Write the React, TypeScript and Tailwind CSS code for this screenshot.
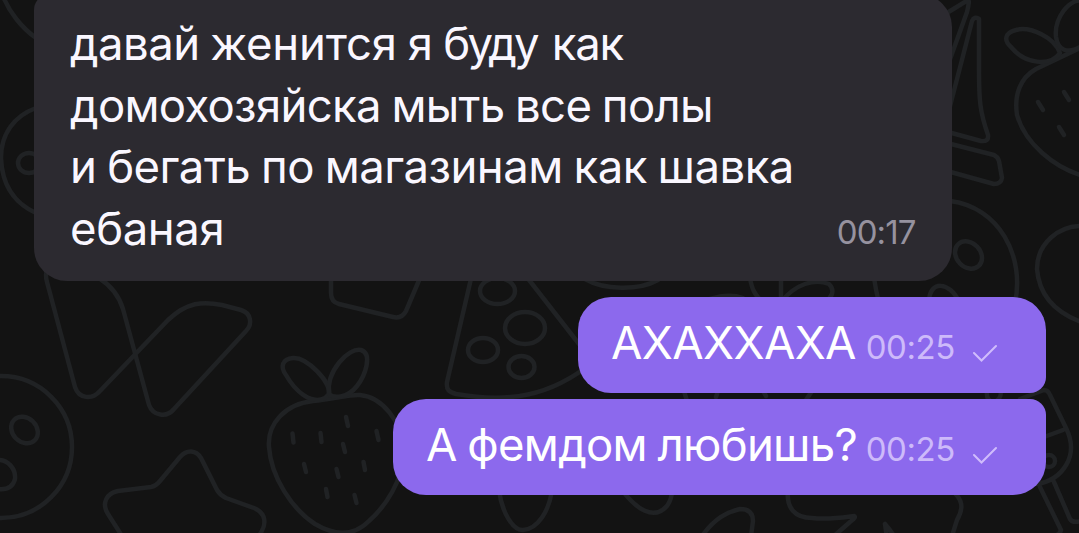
import clsx from "clsx";

const incoming = [
  [
    { text: "давай ", tracking: "tracking-[-0.55px]" },
    { text: "женится ", tracking: "tracking-[-0.2px]" },
    { text: "я ", tracking: "tracking-[-0.5px]" },
    { text: "буду ", tracking: "tracking-[-2.8px] [word-spacing:5px]" },
    { text: "как", tracking: "tracking-[-1.2px]" },
  ],
  [{ text: "домохозяйска мыть все полы", tracking: "tracking-[-0.69px]" }],
  [{ text: "и бегать по магазинам как шавка", tracking: "tracking-[-0.53px]" }],
  [{ text: "ебаная", tracking: "tracking-[-0.4px]" }],
];

const outgoing = [
  {
    text: "АХАХХАХА",
    time: "00:25",
    box: "w-[468px] rounded-[33px] rounded-br-[16px]",
    tracking: "tracking-[-0.6px]",
  },
  {
    text: "А фемдом любишь?",
    time: "00:25",
    box: "w-[653px] rounded-[33px] rounded-tr-[16px]",
    tracking: "tracking-[-0.7px]",
  },
];

const Wallpaper = () => (
  <svg
    aria-hidden="true"
    className="absolute inset-0"
    width="1079"
    height="533"
    viewBox="0 0 1079 533"
    fill="none"
    stroke="#202224"
    strokeWidth="4.5"
    strokeLinecap="round"
    strokeLinejoin="round"
  >
    {/* left edge */}
    <path d="M3 -4C9 12 22 28 36 38" />
    <path d="M36 108C14 116 1 134 1 158C2 184 14 203 36 213" />
    <ellipse cx="29" cy="163" rx="11" ry="10" />
    {/* ribbon */}
    <path d="M47 270Q45 275 47 282L75 387C79 399 92 400 100 391L168 320C187 302 203 301 222 305L241 310C251 313 253 324 246 331L174 409C167 418 153 416 149 405L123 309C119 296 110 285 99 278" />
    {/* cookie, left */}
    <circle cx="1" cy="447" r="71" />
    <ellipse cx="24.500" cy="430" rx="12" ry="14.500" transform="rotate(-45 24.500 430)" />
    <path d="M-3 460C8 459 16 469 15 479Q12 491 -3 489" />
    {/* star */}
    <path d="M122 536L108 514C101 503 107 493 118 491L151 487Q156 486 160 481L180 457C187 449 196 450 201 458L217 490Q220 495 226 498L254 508C266 513 267 524 260 534" />
    {/* strawberry, left */}
    <path d="M313 401C285 404 267 424 269 447C271 477 292 509 315 524C337 537 355 535 369 521C386 506 402 481 405 452C402 421 382 397 360 395C350 394 335 399 313 401Z" />
    <path d="M329 394C331 382 307 357 293 358C282 359 280 367 286 375C295 391 311 405 325 398Z" />
    <path d="M329 394C326 371 349 347 361 350C373 354 365 376 357 386C347 399 333 398 329 394" />
    <path d="M292.500 433.500l1 9M320.500 433l1 9M346 417l2 9M376.500 431l2 9M343 444l2 8M304 464l2 8M336.500 469l2 8M363.500 462l1.500 8M326 489l1.500 8M354.500 495l2 8" />
    {/* wrapper */}
    <path d="M331 278V293Q331 302 339 304L393 317Q402 319 406 311L420 278" />
    {/* pizza slice */}
    <path d="M473 270L447 382C446 390 449 392 456 394C508 403 550 397 593 362L526 276" />
    <ellipse cx="497.500" cy="291" rx="17.500" ry="13" />
    <ellipse cx="525" cy="328" rx="20" ry="16" />
    <ellipse cx="483" cy="350" rx="15" ry="12" />
    <ellipse cx="521.500" cy="367" rx="13" ry="11" />
    {/* shapes peeking out between the bubbles */}
    <path d="M585 279C604 290 638 291 658 280" />
    <path d="M710 299Q729 293 743 298" />
    <path d="M750 278C752 290 755 294 761 301M781 278V302C795 284 815 278 829 284C836 291 831 298 825 302" />
    <path d="M684 391L687 401M718 391L716 397M763 391L766 396M812 391L806 400M987 391Q986 401 993 402Q1001 401 1001 391" />
    <path d="M499 490C502 514 514 531 523 530C538 529 549 511 552 490" />
    <path d="M622 490C636 509 654 521 667 506Q672 499 672 490" />
    <path d="M702 536C715 518 727 512 740 509Q753 509 753 521L751 536" />
    <path d="M788 490C786 508 795 518 812 518C829 520 846 517 854 516Q857 517 850 522L834 536M885 524Q892 532 895 538M885 524L887 538M951 490C963 499 964 508 957 520L952 536" />
    {/* sail boat */}
    <path d="M942 16L968 0Q970 0 967 12L949 62M972 21Q974 16 979 19V70C979 101 980 112 988 135Q989 142 981 141L948 132M972 21L949 110" />
    <path d="M947 143L994 155Q998 157 999 161L1002 178Q1001 184 994 184L947 171" />
    {/* strawberry, right */}
    <path d="M1084 46L1036 69C1020 78 1014 95 1017 115C1025 143 1054 168 1084 176" />
    <path d="M1060 53C1054 37 1030 26 1016 30C1004 33 1004 41 1011 47C1025 64 1050 67 1060 53Z" />
    <path d="M1084 1C1069 -3 1054 19 1056 37C1058 50 1067 55 1082 46" />
    <path d="M1038 102l5 8M1064 92l5 8M1059 127l5 8" />
    {/* cookie, right */}
    <path d="M950 201C999 207 1025 256 1015 303M874 278Q876 291 879 303" />
    <ellipse cx="968.500" cy="255" rx="12" ry="15" transform="rotate(-43 968.500 255)" />
    <path d="M929 302C929 280 950 281 959 302" />
    <path d="M1084 226C1058 225 1037 244 1037 269C1039 295 1055 313 1084 323" />
    {/* glass */}
    <path d="M1020 399L1044 390Q1048 390 1050 395L1066 428C1080 456 1062 480 1037 484M1044 437L1063 430M1040 487L1061 530Q1060 534 1055 536M1054 482L1070 519Q1073 524 1084 520" />
    <circle cx="1049" cy="461" r="6" />
  </svg>
);

const Check = () => (
  <svg
    aria-hidden="true"
    className="mt-[16px] mr-[49px] ml-[17px] shrink-0"
    width="25"
    height="18"
    viewBox="0 0 25 18"
    fill="none"
    stroke="#d0bcfc"
    strokeWidth="2"
    strokeLinecap="round"
  >
    <path d="M2 9L9.500 16.500L24 2" />
  </svg>
);

export default function App() {
  return (
    <main className="relative h-[533px] w-[1079px] overflow-hidden bg-[#131313] font-['Inter',sans-serif]">
      <Wallpaper />
      <div className="relative flex h-full flex-col">
        <div className="-mt-[6px] ml-[34px] flex h-[287px] w-[917.5px] shrink-0 items-end justify-between rounded-[33px] rounded-tl-[16px] bg-[#2c2a30] pr-[36px] pb-[22px] pl-[36px]">
          <div className="text-[45.5px] leading-[61.5px] whitespace-nowrap text-[#faf7ff] [word-spacing:-1.5px]">
            {incoming.map((line, i) => (
              <p key={i}>
                {line.map((part) => (
                  <span key={part.text} className={part.tracking}>
                    {part.text}
                  </span>
                ))}
              </p>
            ))}
          </div>
          <time className="text-[33px] leading-[54px] tracking-[-0.9px] text-[#96929f]">00:17</time>
        </div>
        <div className="mt-[16px] mr-[33px] flex flex-col items-end gap-[6px]">
          {outgoing.map((m) => (
            <div
              key={m.text}
              className={clsx("flex h-[96px] items-center bg-[#8c69ed] pl-[33px]", m.box)}
            >
              <p
                className={clsx(
                  "-mt-[4px] text-[45.5px] leading-[60px] whitespace-nowrap text-white [word-spacing:-1.5px]",
                  m.tracking,
                )}
              >
                {m.text}
              </p>
              <time className="mt-[4px] ml-auto text-[33px] leading-[40px] tracking-[-0.4px] text-[#cdbafa]">
                {m.time}
              </time>
              <Check />
            </div>
          ))}
        </div>
      </div>
    </main>
  );
}
